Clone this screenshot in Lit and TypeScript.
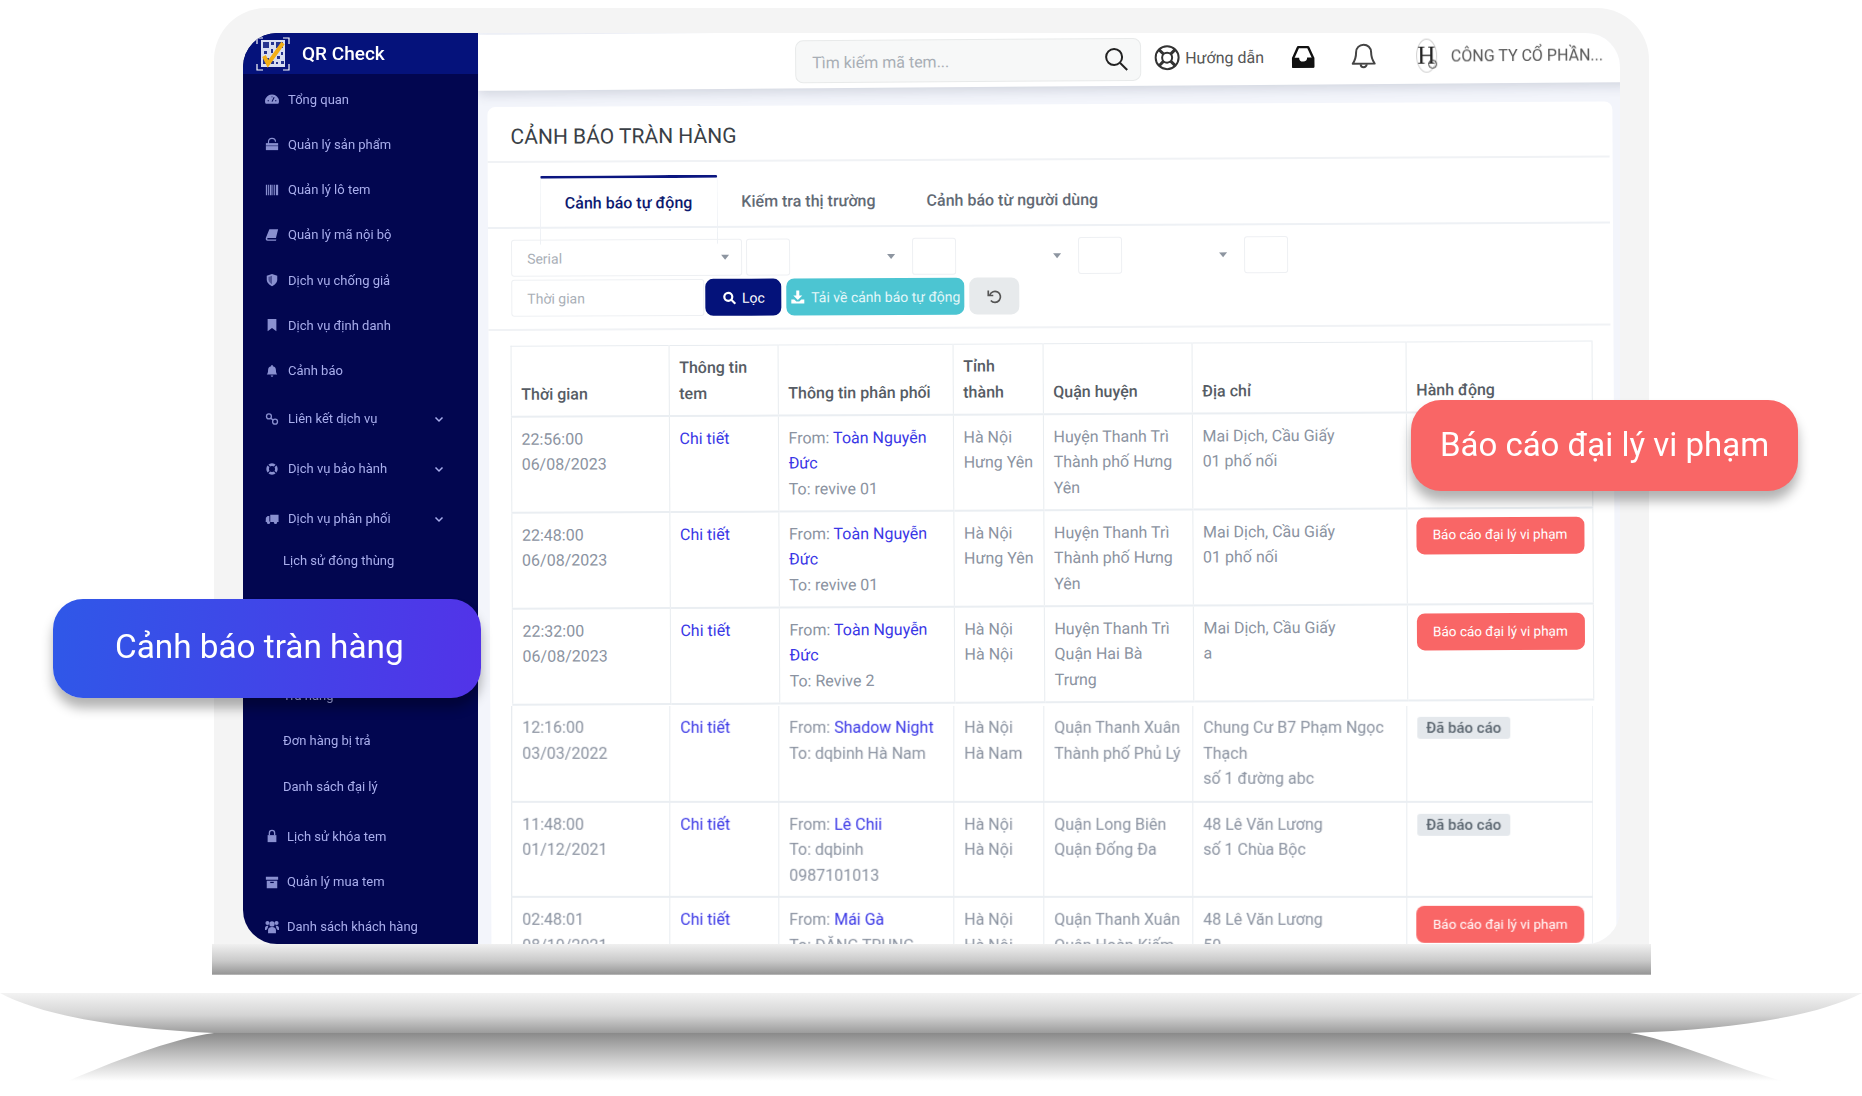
import { LitElement, html, css, svg } from "lit";
import { customElement } from "lit/decorators.js";

const icons: Record<string, unknown> = {
  gauge: svg`<path d="M8 3a7.500 7.500 0 0 0-8 7.500c0 1.200.3 2 .9 3h14.200c.6-1 .9-1.800.9-3A7.500 7.500 0 0 0 8 3z"/><path d="M8 11 10.500 6M3 10h1.500M11.500 10H13M8 5v1" stroke="#020650" stroke-width="1.200" fill="none"/>`,
  bag: svg`<path d="M1 7h14v8H1z"/><path d="M4 9V5.500C4 3 5.500 1.500 8 1.500S12 3 12 5.500" fill="none" stroke="currentColor" stroke-width="1.300"/><path d="M1 10h14" stroke="#020650" stroke-width=".6"/>`,
  barcode: svg`<path d="M1 2h1.500v12H1zM3.500 2h1v12h-1zM5.500 2h2v12h-2zM8.500 2h1v12h-1zM10.500 2h1v12h-1zM12.500 2h2.500v12h-2.500z"/>`,
  book: svg`<path d="M5 1.500h10l-2.500 10H3.500c-1 0-1.500 1.200-.5 1.500h10l-.5 1.500H3c-2 0-2.500-2-2-3.500z"/>`,
  shield: svg`<path d="M8 1l6 2v4.500c0 3.500-3 6.500-6 7.500-3-1-6-4-6-7.500V3z"/><path d="M8 3.200v9.600c-2-.9-4-3-4-5.300V4.500z" fill="#020650" opacity=".45"/>`,
  bookmark: svg`<path d="M3 1h10v14l-5-3.500L3 15z"/>`,
  bell: svg`<path d="M8 1a1 1 0 0 1 1 1v.6A4.500 4.500 0 0 1 12.500 7c0 3 .8 4 1.500 5H2c.7-1 1.500-2 1.500-5A4.500 4.500 0 0 1 7 2.600V2a1 1 0 0 1 1-1zM6.500 13h3a1.500 1.500 0 0 1-3 0z"/>`,
  link: svg`<g fill="none" stroke="currentColor" stroke-width="1.500"><circle cx="4.500" cy="5" r="2.800"/><circle cx="11.500" cy="11" r="2.800"/><path d="M6.500 7 9.500 9.500"/></g>`,
  buoy: svg`<g fill="none" stroke="currentColor"><circle cx="8" cy="8" r="5" stroke-width="3"/></g><path d="m2.500 2.500 3 3M13.500 2.500l-3 3M2.500 13.500l3-3M13.500 13.500l-3-3" stroke="#020650" stroke-width="1.300"/>`,
  truck: svg`<path d="M6 3h9.500v8.500H6zM1 6.500 3 4.500h2v7H.8z"/><circle cx="4" cy="12" r="1.800"/><circle cx="12" cy="12" r="1.800"/>`,
  lock: svg`<path d="M3 7h10v8H3z"/><path d="M5 7V4.500a3 3 0 0 1 6 0V7" fill="none" stroke="currentColor" stroke-width="1.500"/>`,
  archive: svg`<path d="M1 2h14v3.500H1zM2 6.500h12V15H2z"/><path d="M6 8.500h4" stroke="#020650" stroke-width="1.400"/>`,
  users: svg`<circle cx="8" cy="4.500" r="3"/><circle cx="2.800" cy="3.500" r="2.300"/><circle cx="13.200" cy="3.500" r="2.300"/><path d="M3.500 15v-3.500C3.500 9 5.500 8 8 8s4.500 1 4.500 3.500V15zM0 9.500C0 7.500 1 6.500 2.800 6.500c.5 0 .9.1 1.200.2-.6.6-.9 1.600-.9 2.800-.6.4-1.100 1-1.400 2H0zM16 9.500c0-2-1-3-2.800-3-.5 0-.9.1-1.200.2.600.6.900 1.600.9 2.800.6.4 1.100 1 1.400 2H16z"/>`,
};

type Row = { time: string[]; from: string; fromRest?: string; to: string[]; prov: string[]; dist: string[]; addr: string[]; done?: boolean };

const rows: Row[] = [
  { time: ["22:56:00", "06/08/2023"], from: "Toàn Nguyễn", fromRest: "Đức", to: ["To: revive 01"], prov: ["Hà Nội", "Hưng Yên"], dist: ["Huyện Thanh Trì", "Thành phố Hưng", "Yên"], addr: ["Mai Dịch, Cầu Giấy", "01 phố nối"] },
  { time: ["22:48:00", "06/08/2023"], from: "Toàn Nguyễn", fromRest: "Đức", to: ["To: revive 01"], prov: ["Hà Nội", "Hưng Yên"], dist: ["Huyện Thanh Trì", "Thành phố Hưng", "Yên"], addr: ["Mai Dịch, Cầu Giấy", "01 phố nối"] },
  { time: ["22:32:00", "06/08/2023"], from: "Toàn Nguyễn", fromRest: "Đức", to: ["To: Revive 2"], prov: ["Hà Nội", "Hà Nội"], dist: ["Huyện Thanh Trì", "Quận Hai Bà", "Trưng"], addr: ["Mai Dịch, Cầu Giấy", "a"] },
  { time: ["12:16:00", "03/03/2022"], from: "Shadow Night", to: ["To: dqbinh Hà Nam"], prov: ["Hà Nội", "Hà Nam"], dist: ["Quận Thanh Xuân", "Thành phố Phủ Lý"], addr: ["Chung Cư B7 Phạm Ngọc", "Thạch", "số 1 đường abc"], done: true },
  { time: ["11:48:00", "01/12/2021"], from: "Lê Chii", to: ["To: dqbinh", "0987101013"], prov: ["Hà Nội", "Hà Nội"], dist: ["Quận Long Biên", "Quận Đống Đa"], addr: ["48 Lê Văn Lương", "số 1 Chùa Bộc"], done: true },
  { time: ["02:48:01", "08/10/2021"], from: "Mái Gà", to: ["To: ĐẶNG TRUNG"], prov: ["Hà Nội", "Hà Nội"], dist: ["Quận Thanh Xuân", "Quận Hoàn Kiếm"], addr: ["48 Lê Văn Lương", "50"] },
];

const colWidths = [158, 109, 175, 90, 149, 214, 186];

const navTop: [string, string][] = [
  ["gauge", "Tổng quan"], ["bag", "Quản lý sản phẩm"], ["barcode", "Quản lý lô tem"], ["book", "Quản lý mã nội bộ"],
  ["shield", "Dịch vụ chống giả"], ["bookmark", "Dịch vụ định danh"], ["bell", "Cảnh báo"],
];
const navMore: [string, string][] = [["link", "Liên kết dịch vụ"], ["buoy", "Dịch vụ bảo hành"], ["truck", "Dịch vụ phân phối"]];
const navEnd: [string, string][] = [["lock", "Lịch sử khóa tem"], ["archive", "Quản lý mua tem"], ["users", "Danh sách khách hàng"]];

const lines = (l: string[]) => l.map((t, i) => html`${i ? html`<br />` : ""}${t}`);

@customElement("app-root")
export class AppRoot extends LitElement {
  static styles = css`
    :host { display: block; position: relative; width: 1862px; height: 1096px; overflow: hidden; background: #fff; font-family: Roboto, "Noto Sans", sans-serif; }
    .stage { padding-top: 8px; }
    .lid { width: 1377px; margin-left: 214px; padding: 25px 29px 0; background: #f4f4f4; border-radius: 52px 52px 0 0; }
    .screen { display: flex; height: 911px; border-radius: 34px; overflow: hidden; background: #f3f5fb; filter: blur(0.35px); }
    .chin { height: 31px; margin: 0 -31px; background: linear-gradient(#f0f0f0, #c9c9c9 55%, #989898 96%, #c8c8c8); }
    .base { display: block; margin-top: 18px; width: 1862px; height: 90px; }

    .side { flex: 0 0 235px; position: relative; z-index: 2; background: #020650; color: #a9aeec; font-size: 13px; }
    .brand { display: flex; align-items: center; gap: 12px; height: 41px; padding-left: 13px; background: #05127b; color: #fff; font-size: 19px; font-weight: 500; }
    .logo { width: 34px; height: 34px; }
    .nav { padding-top: 2.5px; }
    .item { display: flex; align-items: center; height: 45.25px; padding-left: 22px; gap: 9px; white-space: nowrap; }
    .item svg.ic { width: 14px; height: 14px; flex: none; fill: #8a90d0; color: #8a90d0; }
    .item.tall { height: 50px; }
    .item.tight { gap: 8px; }
    .more { padding-top: 0.5px; }
    .chev { width: 10px; height: 10px; margin-left: auto; margin-right: 34px; fill: none; stroke: #a9aeec; stroke-width: 1.500; }
    .subs { margin-top: -6px; margin-bottom: 5px; }
    .sub { padding-left: 40px; }
    .sub.skip { margin-top: 90px; }

    .pane { flex: 1; min-width: 0; transform: rotate(-0.28deg); transform-origin: 0 0; color: #8b93a1; font-size: 16px; }
    .top { display: flex; align-items: center; height: 56px; width: 1160px; background: #fff; box-shadow: 0 4px 12px rgba(60, 70, 100, 0.18); color: #555; white-space: nowrap; transform: rotate(-0.15deg); transform-origin: 690px 28px; }
    .search { display: flex; align-items: center; justify-content: space-between; box-sizing: border-box; width: 346px; height: 43px; margin: 2px 0 0 317px; padding: 0 11px 0 16px; background: #f7f8f8; border: 1px solid #e8eaea; border-radius: 8px; color: #a8aeb5; }
    .search span { padding-top: 2px; }
    .top svg { flex: none; }
    .help { margin-left: 13px; margin-right: 5px; }
    .inbox { margin-left: 27px; }
    .bell { margin-left: 36px; }
    .avatar { position: relative; display: flex; align-items: center; justify-content: center; box-sizing: border-box; width: 21px; height: 34px; margin-left: 40px; margin-right: 14px; border: 1px solid #cfcfcf; border-radius: 50%; font: 25px "Liberation Serif", serif; color: #222; }
    .avatar::after { content: ""; position: absolute; left: 11px; bottom: 3px; width: 7px; height: 7px; border: 1.500px solid #333; border-radius: 50%; }
    .card { width: 1125px; margin: 18px 0 0 9px; background: #fff; border-radius: 8px 8px 0 0; }
    .title { height: 54px; line-height: 60px; margin-right: 3px; padding-left: 23px; border-bottom: 2px solid #f0f2f5; font-size: 21px; color: #3a3f46; white-space: nowrap; }
    .tabs { display: flex; height: 51px; margin: 13px 3px 0 0; padding-left: 52px; border-bottom: 2px solid #eef1f5; white-space: nowrap; color: #626a75; font-weight: 500; }
    .tab { padding: 17px 24px 0; }
    .tab.third { margin-left: 3px; }
    .tab.on { height: 50px; padding-top: 15px; border: 1px solid #eef1f5; border-top: 3px solid #0b1680; border-bottom: 2px solid #fff; color: #0e1a70; border-radius: 3px 3px 0 0; }
    .filters { display: flex; flex-direction: column; gap: 3px; margin: 11px 3px 0 0; padding: 0 0 12px 23px; border-bottom: 2px solid #f0f2f5; }
    .row { display: flex; gap: 4px; height: 37px; }
    .field { display: flex; align-items: center; justify-content: space-between; box-sizing: border-box; height: 37px; padding: 0 12px 0 15px; border: 1px solid #eef0f3; border-radius: 3px; font-size: 14px; color: #a9afb7; }
    .field.serial { width: 231px; }
    .field.box { width: 44px; padding: 0; }
    .field.ghost { width: 114px; border-color: transparent; justify-content: flex-end; }
    .field.date { width: 193px; }
    .tri { width: 0; height: 0; border: 4px solid transparent; border-top: 5px solid #8d95a0; border-bottom: 0; }
    .btn { display: flex; align-items: center; justify-content: center; gap: 6px; box-sizing: border-box; height: 37px; border-radius: 8px; color: #fff; font-size: 14px; white-space: nowrap; }
    .btn svg { flex: none; }
    .loc { width: 76px; margin-left: -3px; background: #04127a; }
    .dl { width: 178px; margin-left: 1px; background: #4cc5d2; color: #e4f7f9; }
    .reset { width: 50px; margin-left: 1px; background: #e7eaec; }
    table { width: 1081px; margin-left: 21.500px; border-collapse: collapse; table-layout: fixed; border: 1px solid #e8ecf0; }
    .head { margin-top: 15px; }
    .flat { margin-left: 20.500px; border-top: 0; transform: rotate(0.28deg); transform-origin: 0 0; }
    th, td { box-sizing: border-box; padding: 0 8px 0 10px; text-align: left; border-right: 1px solid #e8ecf0; border-bottom: 2px solid #eaeef2; line-height: 25.6px; white-space: nowrap; }
    th { height: 70px; padding-bottom: 8px; vertical-align: bottom; color: #565c64; font-weight: 500; }
    td { height: 96.2px; padding-top: 9px; vertical-align: top; }
    .flat td { height: 95.6px; }
    .a { color: #3a37e6; }
    .report { display: flex; align-items: center; justify-content: center; height: 37px; margin-top: -1px; margin-left: -1px; background: #f96666; border-radius: 8px; color: #fff; font-size: 13.500px; }
    .chip { display: inline-block; margin-top: 2px; padding: 0 9px; height: 22px; line-height: 22px; background: #e4e8ec; border-radius: 3px; color: #5b6670; font-size: 15px; font-weight: 500; }

    .callout { position: absolute; z-index: 5; display: flex; align-items: center; box-sizing: border-box; border-radius: 30px; color: #fff; white-space: nowrap; box-shadow: 0 10px 12px rgba(0, 0, 0, 0.3); }
    .blue { left: 53px; top: 599px; width: 428px; height: 99px; padding: 0 0 5px 62px; font-size: 33.300px; background: linear-gradient(95deg, #2f58e8, #5233e8); }
    .red { left: 1411px; top: 400px; width: 387px; height: 91px; padding-bottom: 3px; justify-content: center; font-size: 33px; background: #f96666; }
  `;

  private item(i: [string, string], extra = "", chev = false) {
    return html`<div class="item ${extra}">
      <svg class="ic" viewBox="0 0 16 16">${icons[i[0]]}</svg><span>${i[1]}</span>
      ${chev ? html`<svg class="chev" viewBox="0 0 10 10"><path d="M1.500 3.500 5 7l3.500-3.500" /></svg>` : ""}
    </div>`;
  }

  private logo() {
    const cells = [[7,5,6,6],[8,14,3,3],[15,5,3,3],[20,5,7,6],[7,21,6,6],[15,12,2,4],[21,19,3,3],[25,15,2,3],[25,24,3,3],[15,24,3,3],[20,25,2,2]];
    return html`<svg class="logo" viewBox="0 0 34 34">
      <rect x="5" y="3" width="24" height="27" fill="#d8def2" />
      ${cells.map((c) => svg`<rect x=${c[0]} y=${c[1]} width=${c[2]} height=${c[3]} fill="#26348f" />`)}
      <path d="M8 19l4 8 15-21" fill="none" stroke="#f2ae15" stroke-width="4" />
      <path d="M27 1h6v6M1 27v6h6M27 33h6v-6M7 1H1v6" fill="none" stroke="#fff" stroke-width="1.200" />
    </svg>`;
  }

  private cols() {
    return html`<colgroup>${colWidths.map((w) => html`<col style="width:${w}px" />`)}</colgroup>`;
  }

  private tr(r: Row) {
    return html`<tr>
      <td>${lines(r.time)}</td>
      <td><span class="a">Chi tiết</span></td>
      <td>From: <span class="a">${r.from}</span>${r.fromRest ? html`<br /><span class="a">${r.fromRest}</span>` : ""}<br />${lines(r.to)}</td>
      <td>${lines(r.prov)}</td>
      <td>${lines(r.dist)}</td>
      <td>${lines(r.addr)}</td>
      <td>${r.done ? html`<span class="chip">Đã báo cáo</span>` : html`<div class="report">Báo cáo đại lý vi phạm</div>`}</td>
    </tr>`;
  }

  render() {
    return html`
      <div class="stage">
        <div class="lid">
          <div class="screen">
            <aside class="side">
              <div class="brand">${this.logo()}<span>QR Check</span></div>
              <div class="nav">
                ${navTop.map((n) => this.item(n))}
                <div class="more">${navMore.map((n) => this.item(n, "tall", true))}</div>
                <div class="subs">
                  <div class="item sub">Lịch sử đóng thùng</div>
                  <div class="item sub skip">Trả hàng</div>
                  <div class="item sub">Đơn hàng bị trả</div>
                  <div class="item sub">Danh sách đại lý</div>
                </div>
                ${navEnd.map((n) => this.item(n, "tight"))}
              </div>
            </aside>
            <main class="pane">
              <header class="top">
                <div class="search">
                  <span>Tìm kiếm mã tem...</span>
                  <svg width="26" height="26" viewBox="0 0 26 26" fill="none" stroke="#222" stroke-width="2"><circle cx="11" cy="11" r="8" /><path d="m17 17 7 7" /></svg>
                </div>
                <svg class="help" width="26" height="26" viewBox="0 0 26 26" fill="none" stroke="#333" stroke-width="2"><circle cx="13" cy="13" r="11.500" /><circle cx="13" cy="13" r="5" /><path d="m5 5 4.500 4.500M21 5l-4.500 4.500M5 21l4.500-4.500M21 21l-4.500-4.500" stroke-width="3" /></svg>
                <span>Hướng dẫn</span>
                <svg class="inbox" width="24" height="24" viewBox="0 0 24 24"><path d="M7 2.500h10l5 11V22H2v-8.500z" fill="#fff" stroke="#111" stroke-width="2.400" stroke-linejoin="round" /><path d="M1 13h7a4 4 0 0 0 8 0h7v10H1z" fill="#111" /></svg>
                <svg class="bell" width="25" height="27" viewBox="0 0 25 27" fill="none" stroke="#444" stroke-width="2" stroke-linejoin="round"><path d="M12.500 1.500a7.500 7.500 0 0 1 7.500 7.500c0 6 1 8 3.500 11.500H1.500C4 17 5 15 5 9a7.500 7.500 0 0 1 7.500-7.500z" /><path d="M9.500 21a3 3 0 0 0 6 0" /></svg>
                <div class="avatar">H</div>
                <span>CÔNG TY CỔ PHẦN...</span>
              </header>
              <section class="card">
                <div class="title">CẢNH BÁO TRÀN HÀNG</div>
                <div class="tabs">
                  <div class="tab on">Cảnh báo tự động</div>
                  <div class="tab">Kiếm tra thị trường</div>
                  <div class="tab third">Cảnh báo từ người dùng</div>
                </div>
                <div class="filters">
                  <div class="row">
                    <div class="field serial"><span>Serial</span><i class="tri"></i></div>
                    <div class="field box"></div>
                    <div class="field ghost"><i class="tri"></i></div>
                    <div class="field box"></div>
                    <div class="field ghost"><i class="tri"></i></div>
                    <div class="field box"></div>
                    <div class="field ghost"><i class="tri"></i></div>
                    <div class="field box"></div>
                  </div>
                  <div class="row">
                    <div class="field date"><span>Thời gian</span></div>
                    <div class="btn loc">
                      <svg width="14" height="14" viewBox="0 0 14 14" fill="none" stroke="#fff" stroke-width="2.200"><circle cx="6" cy="6" r="4" /><path d="m9 9 4 4" /></svg>
                      <span>Lọc</span>
                    </div>
                    <div class="btn dl">
                      <svg width="15" height="15" viewBox="0 0 15 15" fill="#fff"><path d="M6 1h3v5h3L7.500 10.500 3 6h3zM1 10h3l2 2h3l2-2h3v4H1z" /></svg>
                      <span>Tải về cảnh báo tự động</span>
                    </div>
                    <div class="btn reset">
                      <svg width="18" height="18" viewBox="0 0 18 18" fill="none" stroke="#555" stroke-width="1.700"><path d="M4.500 7.500a5.500 5.500 0 1 1 1 5.500" /><path d="M3 3v5h5" /></svg>
                    </div>
                  </div>
                </div>
                <table class="head">
                  ${this.cols()}
                  <thead>
                    <tr>
                      <th>Thời gian</th><th>Thông tin<br />tem</th><th>Thông tin phân phối</th><th>Tỉnh<br />thành</th><th>Quận huyện</th><th>Địa chỉ</th><th>Hành động</th>
                    </tr>
                  </thead>
                  <tbody>${rows.slice(0, 3).map((r) => this.tr(r))}</tbody>
                </table>
                <table class="flat">
                  ${this.cols()}
                  <tbody>${rows.slice(3).map((r) => this.tr(r))}</tbody>
                </table>
              </section>
            </main>
          </div>
          <div class="chin"></div>
        </div>
        <svg class="base" viewBox="0 0 1862 90">
          <defs>
            <linearGradient id="g1" x1="0" y1="0" x2="0" y2="1"><stop offset="0" stop-color="#f3f3f3" /><stop offset="0.55" stop-color="#d4d4d4" /><stop offset="1" stop-color="#9c9c9c" /></linearGradient>
            <linearGradient id="g2" x1="0" y1="0" x2="0" y2="1"><stop offset="0" stop-color="#8a8a8a" /><stop offset="0.5" stop-color="#c6c6c6" /><stop offset="1" stop-color="#fff" /></linearGradient>
          </defs>
          <path d="M0 0H1862C1820 22 1740 36 1630 40H214C120 36 40 22 0 0Z" fill="url(#g1)" />
          <path d="M214 40H1630C1670 46 1720 70 1782 88H68C110 70 170 46 214 40Z" fill="url(#g2)" />
        </svg>
      </div>
      <div class="callout blue">Cảnh báo tràn hàng</div>
      <div class="callout red">Báo cáo đại lý vi phạm</div>
    `;
  }
}
